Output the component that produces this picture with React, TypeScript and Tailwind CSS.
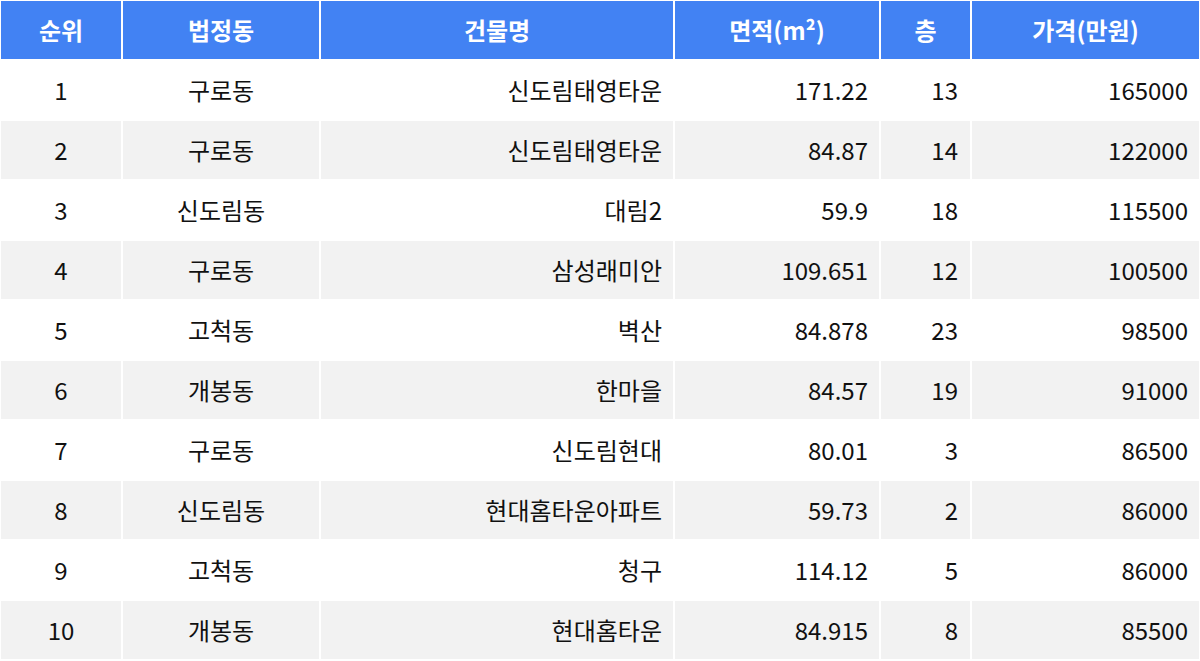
import React from "react";

const rows = [
  ["1", "구로동", "신도림태영타운", "171.22", "13", "165000"],
  ["2", "구로동", "신도림태영타운", "84.87", "14", "122000"],
  ["3", "신도림동", "대림2", "59.9", "18", "115500"],
  ["4", "구로동", "삼성래미안", "109.651", "12", "100500"],
  ["5", "고척동", "벽산", "84.878", "23", "98500"],
  ["6", "개봉동", "한마을", "84.57", "19", "91000"],
  ["7", "구로동", "신도림현대", "80.01", "3", "86500"],
  ["8", "신도림동", "현대홈타운아파트", "59.73", "2", "86000"],
  ["9", "고척동", "청구", "114.12", "5", "86000"],
  ["10", "개봉동", "현대홈타운", "84.915", "8", "85500"],
];

const headers = ["순위", "법정동", "건물명", "면적(m²)", "층", "가격(만원)"];

export default function App() {
  const font = { fontFamily: '"Noto Sans CJK KR", "Noto Sans", sans-serif' };
  return (
    <div className="w-[1200px] h-[661px] bg-white p-[1px]" style={font}>
      <div className="grid grid-cols-[120px_196px_352px_204px_89px_1fr] auto-rows-[58px] gap-[2px]">
        {headers.map((h) => (
          <div
            key={h}
            className="bg-[#4282f3] text-white font-bold text-[24px] flex items-center justify-center"
          >
            {h}
          </div>
        ))}
        {rows.map((r, i) => {
          const bg = i % 2 === 1 ? "bg-[#f2f2f2]" : "bg-white";
          return (
            <React.Fragment key={i}>
              <div className={`${bg} text-[24px] text-[#111] flex items-center justify-center`}>{r[0]}</div>
              <div className={`${bg} text-[24px] text-[#111] flex items-center justify-center`}>{r[1]}</div>
              <div className={`${bg} text-[24px] text-[#111] flex items-center justify-end pr-[11px]`}>{r[2]}</div>
              <div className={`${bg} text-[24px] text-[#111] flex items-center justify-end pr-[11px]`}>{r[3]}</div>
              <div className={`${bg} text-[24px] text-[#111] flex items-center justify-end pr-[12px]`}>{r[4]}</div>
              <div className={`${bg} text-[24px] text-[#111] flex items-center justify-end pr-[11px]`}>{r[5]}</div>
            </React.Fragment>
          );
        })}
      </div>
    </div>
  );
}
